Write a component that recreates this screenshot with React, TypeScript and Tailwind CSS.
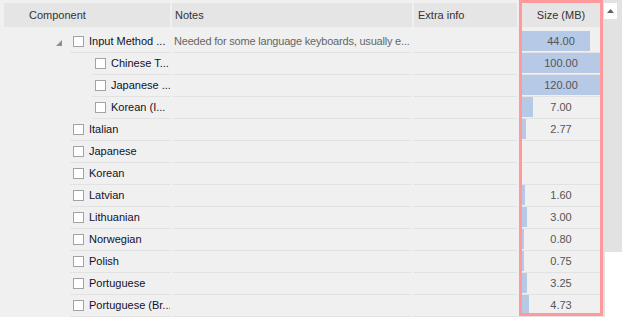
import React from 'react';

type Row = { name: string; level?: number; expander?: boolean; notes?: string; size?: string; bar?: number };

const ROWS: Row[] = [
  { name: 'Input Method ...', expander: true, notes: 'Needed for some language keyboards, usually e...', size: '44.00', bar: 71 },
  { name: 'Chinese T...', level: 1, size: '100.00', bar: 84 },
  { name: 'Japanese ...', level: 1, size: '120.00', bar: 84 },
  { name: 'Korean (I...', level: 1, size: '7.00', bar: 14 },
  { name: 'Italian', size: '2.77', bar: 7 },
  { name: 'Japanese' },
  { name: 'Korean' },
  { name: 'Latvian', size: '1.60', bar: 6 },
  { name: 'Lithuanian', size: '3.00', bar: 8 },
  { name: 'Norwegian', size: '0.80', bar: 5 },
  { name: 'Polish', size: '0.75', bar: 5 },
  { name: 'Portuguese', size: '3.25', bar: 8 },
  { name: 'Portuguese (Br...', size: '4.73', bar: 10 },
];

function Checkbox() {
  return <span className="w-[11px] h-[11px] shrink-0 border border-[#a3a3a3] bg-white" />;
}

export default function App() {
  return (
    <div
      className="relative w-[622px] h-[317px] overflow-hidden bg-[#f0f0f0] flex text-[11px] leading-none"
      style={{ fontFamily: '"Liberation Sans", Arial, sans-serif' }}
    >
      <div className="w-[603px] shrink-0 pt-[3px] pl-[4px]">
        {/* header */}
        <div className="flex gap-[2px] h-[24px] text-[#333333]">
          <div className="w-[166px] bg-[#e5e5e5] flex items-center pl-[25px]">Component</div>
          <div className="w-[240px] bg-[#e5e5e5] flex items-center pl-[3px]">Notes</div>
          <div className="w-[103px] bg-[#e5e5e5] flex items-center pl-[4px]">Extra info</div>
          <div className="w-[84px] bg-[#e5e5e5] flex items-center justify-center">Size (MB)</div>
        </div>

        <div className="mt-[4px]">
          {ROWS.map((r, i) => (
            <div key={i} className="flex gap-[2px] h-[22px]">
              <div className="w-[166px] flex">
                <div className={`${r.level ? 'w-[88px]' : 'w-[66px]'} shrink-0 flex items-center justify-end pr-[8px]`}>
                  {r.expander && (
                    <svg width="6" height="6" viewBox="0 0 6 6" className="mt-[2px]">
                      <polygon points="6,0 6,6 0,6" fill="#8e8e8e" />
                    </svg>
                  )}
                </div>
                <div className="flex-1 flex items-center gap-[5px] pl-[3px] border-b border-[#e2e2e2] text-[#10102a] whitespace-nowrap overflow-hidden">
                  <Checkbox />
                  <span>{r.name}</span>
                </div>
              </div>
              <div className="w-[240px] flex items-center pl-[2px] border-b border-[#e2e2e2] text-[#666666] tracking-[-0.2px] whitespace-nowrap overflow-hidden">
                {r.notes}
              </div>
              <div className="w-[103px] border-b border-[#e2e2e2]" />
              <div className="w-[84px] relative border-b border-[#e2e2e2] flex items-center justify-center text-[#555555]">
                {r.bar ? <div className="absolute left-0 top-0 h-[20px] bg-[#b6c9e6]" style={{ width: r.bar }} /> : null}
                <span className="relative">{r.size}</span>
              </div>
            </div>
          ))}
        </div>
      </div>

      {/* scrollbar */}
      <div className="w-[19px] shrink-0 bg-[#e2e2e2] flex flex-col">
        <div className="mt-[3px] ml-[1px] w-[13px] h-[16px] bg-white flex items-center justify-center">
          <svg width="7" height="4" viewBox="0 0 7 4">
            <polygon points="3.5,0 7,4 0,4" fill="#606060" />
          </svg>
        </div>
        <div className="flex-1" />
        <div className="h-[65px] ml-[2px] bg-white" />
      </div>

      {/* highlight */}
      <div className="absolute left-[519px] top-0 w-[84px] h-[316px] border-[3px] border-[#ff999b]" />
    </div>
  );
}
